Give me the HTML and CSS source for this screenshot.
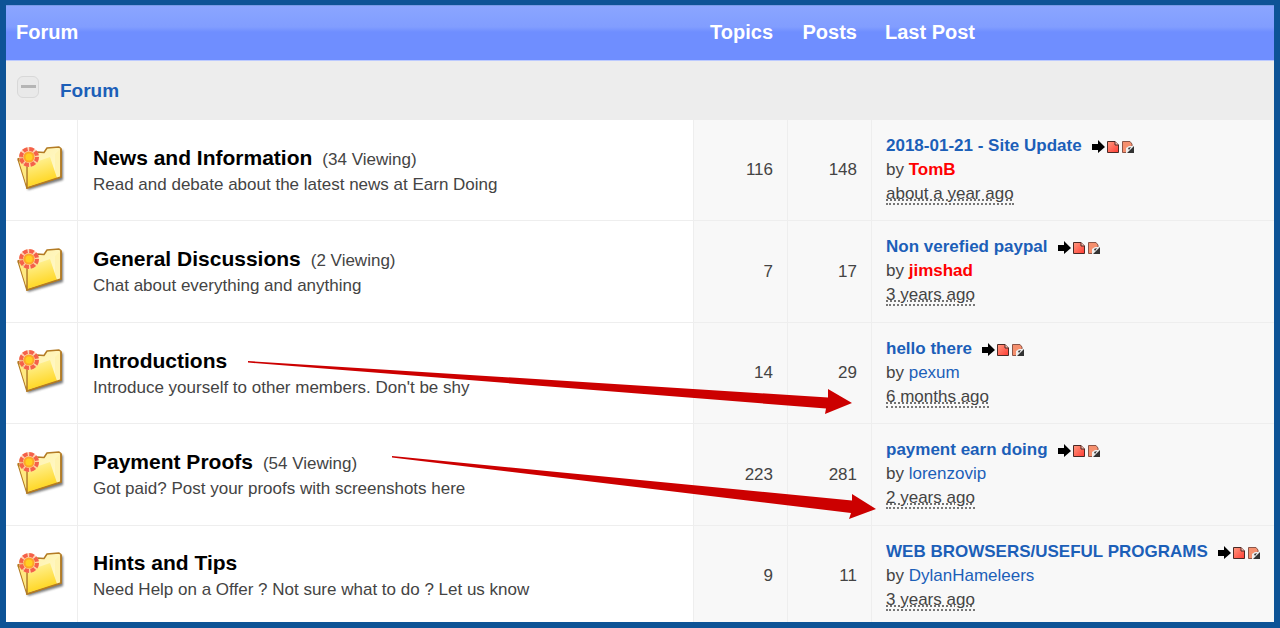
FILE: index.html
```html
<!DOCTYPE html>
<html lang="en">
<head>
<meta charset="utf-8">
<title>Forum</title>
<link rel="stylesheet" href="styles.css">
</head>
<body>
<svg class="defs" aria-hidden="true">
  <defs>
    <linearGradient id="paper" x1="0" y1="0" x2="1" y2="1"><stop offset="0" stop-color="#fff0a0"/><stop offset="1" stop-color="#fffbd8"/></linearGradient>
    <linearGradient id="flap" x1="0" y1="0" x2="0.3" y2="1"><stop offset="0" stop-color="#fff6a8"/><stop offset="1" stop-color="#ffd51c"/></linearGradient>
    <linearGradient id="page" x1="0" y1="0" x2="1" y2="1"><stop offset="0" stop-color="#ff9a80"/><stop offset="1" stop-color="#ff3c34"/></linearGradient>
    <filter id="soft" x="-20%" y="-20%" width="140%" height="140%"><feGaussianBlur stdDeviation="1"/></filter>
    <symbol id="folder" viewBox="0 0 48 46">
      <path d="M4 16 11 44 46 34V4L32 5 28 10Z" fill="#444" opacity=".7" filter="url(#soft)"/>
      <path d="M1 13 20 6 27 6.500 30 2 42 1 44 2.500V31L10 42Z" fill="url(#paper)" stroke="#b37b24" stroke-width="1.500" stroke-linejoin="round"/>
      <path d="M43 3V31L38 33V8Z" fill="#fff3b0"/>
      <path d="M10 19 33 11 40 32 10 41Z" fill="url(#flap)"/>
      <path d="M1 14 10 20V42L44 31V3" fill="none" stroke="#b37b24" stroke-width="1.500"/>
      <path d="M2 15 9 20V38Z" fill="#ffe980"/>
      <circle cx="12" cy="11" r="10" fill="#ffc9a0" opacity=".8"/>
      <circle cx="12" cy="11" r="8" fill="none" stroke="#f4614a" stroke-width="4" stroke-dasharray="4.600 1.683"/>
      <circle cx="12" cy="11" r="4.500" fill="#ffd020" stroke="#ffa728" stroke-width="2"/>
    </symbol>
    <symbol id="latest" viewBox="0 0 42 14">
      <path d="M0 4H6V0L13 7 6 13V10H0Z" fill="#000"/>
      <path d="M15.500 1.500H23L26.500 5V12.500H15.500Z" fill="url(#page)" stroke="#4a2a26"/>
      <path d="M23 1.500V5H26.500" fill="#ffc0b0" stroke="#4a2a26"/>
      <path d="M30.500 1.500H38L40 4V12.500H30.500Z" fill="#f5906e" stroke="#8a5548"/>
      <path d="M34 8 37 6 41 6V13H34Z" fill="#eee"/>
      <path d="M35 13H42V6ZM36 8 39 7 37 10Z" fill="#333"/>
    </symbol>
  </defs>
</svg>
<main class="frame">
  <table class="board">
    <colgroup><col class="col-icon"><col><col class="col-topics"><col class="col-posts"><col class="col-last"></colgroup>
    <thead>
      <tr class="head"><th colspan="2" scope="col">Forum</th><th class="num" scope="col">Topics</th><th class="num" scope="col">Posts</th><th scope="col">Last Post</th></tr>
    </thead>
    <tbody>
      <tr class="category"><td colspan="5"><div class="category-bar"><button class="toggle" type="button" aria-label="Collapse Forum"></button><a href="#">Forum</a></div></td></tr>
    </tbody>
    <tbody>
      <tr class="row">
        <td class="icon"><svg><use href="#folder"/></svg></td>
        <td class="name"><a href="#">News and Information</a><span class="viewing">(34 Viewing)</span><p>Read and debate about the latest news at Earn Doing</p></td>
        <td class="num">116</td><td class="num">148</td>
        <td class="last"><a class="topic" href="#">2018-01-21 - Site Update</a><svg><use href="#latest"/></svg><div>by <a class="staff" href="#">TomB</a></div><div><abbr>about a year ago</abbr></div></td>
      </tr>
      <tr class="row">
        <td class="icon"><svg><use href="#folder"/></svg></td>
        <td class="name"><a href="#">General Discussions</a><span class="viewing">(2 Viewing)</span><p>Chat about everything and anything</p></td>
        <td class="num">7</td><td class="num">17</td>
        <td class="last"><a class="topic" href="#">Non verefied paypal</a><svg><use href="#latest"/></svg><div>by <a class="staff" href="#">jimshad</a></div><div><abbr>3 years ago</abbr></div></td>
      </tr>
      <tr class="row">
        <td class="icon"><svg><use href="#folder"/></svg></td>
        <td class="name"><a href="#">Introductions</a><p>Introduce yourself to other members. Don't be shy</p></td>
        <td class="num">14</td><td class="num">29</td>
        <td class="last"><a class="topic" href="#">hello there</a><svg><use href="#latest"/></svg><div>by <a href="#">pexum</a></div><div><abbr>6 months ago</abbr></div></td>
      </tr>
      <tr class="row">
        <td class="icon"><svg><use href="#folder"/></svg></td>
        <td class="name"><a href="#">Payment Proofs</a><span class="viewing">(54 Viewing)</span><p>Got paid? Post your proofs with screenshots here</p></td>
        <td class="num">223</td><td class="num">281</td>
        <td class="last"><a class="topic" href="#">payment earn doing</a><svg><use href="#latest"/></svg><div>by <a href="#">lorenzovip</a></div><div><abbr>2 years ago</abbr></div></td>
      </tr>
      <tr class="row">
        <td class="icon"><svg><use href="#folder"/></svg></td>
        <td class="name"><a href="#">Hints and Tips</a><p>Need Help on a Offer ? Not sure what to do ? Let us know</p></td>
        <td class="num">9</td><td class="num">11</td>
        <td class="last"><a class="topic" href="#">WEB BROWSERS/USEFUL PROGRAMS</a><svg><use href="#latest"/></svg><div>by <a href="#">DylanHameleers</a></div><div><abbr>3 years ago</abbr></div></td>
      </tr>
    </tbody>
  </table>
  <svg class="arrows" viewBox="0 0 640 170" aria-hidden="true">
    <path d="M8 10 588 46.500 588 38 612 52 585 63 586 57.500 8 11.500Z"/>
    <path d="M152 105 612 149.500 612 143 636 158 609 168 611 162 152 106.500Z"/>
  </svg>
</main>
</body>
</html>
```
FILE: styles.css
```css
body {
  margin: 0;
  font: 17px/24px "Liberation Sans", Arial, sans-serif;
  color: #444;
}
a { color: #1c5fb8; text-decoration: none; }
.defs { position: absolute; width: 0; height: 0; }
.frame {
  position: relative;
  border: 6px solid #0d5396;
  border-top-width: 5px;
}
.board {
  width: 100%;
  table-layout: fixed;
  border-collapse: separate;
  border-spacing: 0;
}
.col-icon { width: 71px; }
.col-topics { width: 94px; }
.col-posts { width: 84px; }
.col-last { width: 403px; }
th, td { padding: 0; text-align: left; }
.head {
  height: 56px;
  color: #fff;
  font-size: 20px;
  background: linear-gradient(#8ba6ff 0, #819dff 22px, #6f8eff 27px, #6f8eff 100%);
}
.head th {
  padding: 0 14px 3px 10px;
  border-top: 1px solid #7899e6;
  border-bottom: 1px solid #bccaff;
  box-sizing: border-box;
}
.head th:last-child { padding-left: 14px; }
.board .num { padding-right: 14px; padding-left: 0; text-align: right; }
.category { height: 59px; background: #ededed; }
.category-bar {
  display: flex;
  align-items: center;
  gap: 21px;
  padding-left: 11px;
  font-size: 19px;
  font-weight: bold;
}
.toggle {
  width: 22px;
  height: 22px;
  margin-bottom: 8px;
  padding: 0;
  border: 1px solid #d8d8d8;
  border-radius: 6px;
  background: linear-gradient(#b5b5b5, #b5b5b5) center / 15px 3px no-repeat #e9e9e9;
}
.row td {
  padding: 14px 0;
  border-bottom: 1px solid #eee;
  border-left: 1px solid #eee;
  vertical-align: middle;
}
.row .icon { border-left: 0; padding: 12px 0 14px 11px; }
.icon svg { display: block; width: 48px; height: 46px; }
.row .name { padding: 15px 0 13px 15px; }
.name > a { color: #000; font-size: 21px; line-height: 26px; font-weight: bold; }
.name p { margin: 0; line-height: 26px; }
.viewing { margin-left: 10px; }
.row .num, .row .last { background: #f8f8f8; }
.row .last { padding-left: 14px; }
.row:nth-child(even) .last { padding-bottom: 15px; }
.last svg { width: 42px; height: 14px; margin-left: 10px; vertical-align: -3px; }
.topic { font-weight: bold; }
.staff { color: #f00; font-weight: bold; }
abbr { text-decoration: underline dotted; border-bottom: 2px dotted #777; }
.row:last-child td { border-bottom: 0; padding-bottom: 10px; }
.arrows {
  position: absolute;
  top: 346px;
  left: 234px;
  width: 640px;
  height: 170px;
  fill: #c00;
  pointer-events: none;
}
```
